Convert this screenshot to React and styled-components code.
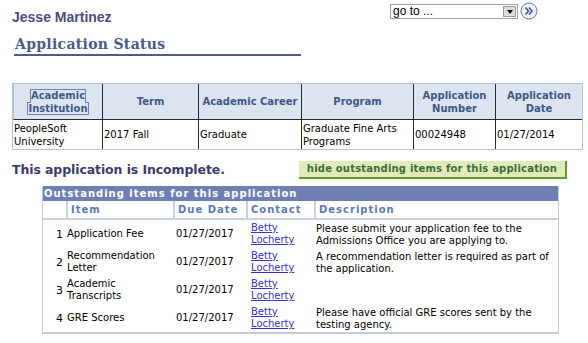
import React from 'react'
import styled, { createGlobalStyle } from 'styled-components'

const GlobalStyle = createGlobalStyle`
  body {
    margin: 0;
    background: #ffffff;
    font-family: "DejaVu Sans", Verdana, sans-serif;
    font-size: 10px;
    color: #000;
  }
`

const apps = [
  {
    institution: 'PeopleSoft University',
    term: '2017 Fall',
    career: 'Graduate',
    program: 'Graduate Fine Arts Programs',
    number: '00024948',
    date: '01/27/2014',
  },
]

const items = [
  { n: 1, item: 'Application Fee', due: '01/27/2017', desc: 'Please submit your application fee to the Admissions Office you are applying to.' },
  { n: 2, item: 'Recommendation Letter', due: '01/27/2017', desc: 'A recommendation letter is required as part of the application.' },
  { n: 3, item: 'Academic Transcripts', due: '01/27/2017', desc: '' },
  { n: 4, item: 'GRE Scores', due: '01/27/2017', desc: 'Please have official GRE scores sent by the testing agency.' },
]

function App() {
  return (
    <Page>
      <GlobalStyle />
      <TopBar>
        <Name>Jesse Martinez</Name>
        <Nav>
          <Select>
            <span>go to ...</span>
            <DropArrow />
          </Select>
          <GoButton>
            <svg width="18" height="18" viewBox="0 0 18 18">
              <circle cx="9" cy="9" r="8" fill="#eef2fa" stroke="#6a7cb0" strokeWidth="1" />
              <path d="M5.5 5.5 L8.5 9 L5.5 12.5 M9 5.5 L12 9 L9 12.5" fill="none" stroke="#2f4a8c" strokeWidth="1.4" />
            </svg>
          </GoButton>
        </Nav>
      </TopBar>

      <Title>Application Status</Title>

      <MainTable>
        <colgroup>
          <col style={{ width: 89 }} />
          <col style={{ width: 96 }} />
          <col style={{ width: 103 }} />
          <col style={{ width: 112 }} />
          <col style={{ width: 82 }} />
          <col style={{ width: 87 }} />
        </colgroup>
        <thead>
          <tr>
            <MainTh $left><FocusLink href="#">Academic Institution</FocusLink></MainTh>
            <MainTh>Term</MainTh>
            <MainTh>Academic Career</MainTh>
            <MainTh>Program</MainTh>
            <MainTh>Application Number</MainTh>
            <MainTh>Application Date</MainTh>
          </tr>
        </thead>
        <tbody>
          {apps.map((a) => (
            <tr key={a.number}>
              <MainTd>{a.institution}</MainTd>
              <MainTd>{a.term}</MainTd>
              <MainTd>{a.career}</MainTd>
              <MainTd>{a.program}</MainTd>
              <MainTd>{a.number}</MainTd>
              <MainTd>{a.date}</MainTd>
            </tr>
          ))}
        </tbody>
      </MainTable>

      <StatusRow>
        <StatusText>This application is Incomplete.</StatusText>
        <HideButton>hide outstanding items for this application</HideButton>
      </StatusRow>

      <ItemsTable>
        <colgroup>
          <col style={{ width: 23 }} />
          <col style={{ width: 107 }} />
          <col style={{ width: 73 }} />
          <col style={{ width: 68 }} />
          <col style={{ width: 244 }} />
        </colgroup>
        <thead>
          <tr>
            <Caption colSpan={5}>Outstanding items for this application</Caption>
          </tr>
          <tr>
            <ItemTh />
            <ItemTh>Item</ItemTh>
            <ItemTh>Due Date</ItemTh>
            <ItemTh>Contact</ItemTh>
            <ItemTh>Description</ItemTh>
          </tr>
        </thead>
        <tbody>
          {items.map((it) => (
            <tr key={it.n}>
              <NumTd>{it.n}</NumTd>
              <ItemTd>{it.item}</ItemTd>
              <ItemTd $pad="3px">{it.due}</ItemTd>
              <ItemTd $pad="5px"><Contact href="#">Betty Locherty</Contact></ItemTd>
              <DescTd>{it.desc}</DescTd>
            </tr>
          ))}
        </tbody>
      </ItemsTable>
    </Page>
  )
}

export default App

const Page = styled.div`
  width: 588px;
  height: 343px;
  overflow: hidden;
`

const TopBar = styled.div`
  display: flex;
  justify-content: space-between;
  align-items: flex-start;
  padding: 2px 50px 0 12px;
`

const Name = styled.div`
  font-family: "Liberation Sans", Arial, sans-serif;
  font-weight: bold;
  font-size: 14px;
  color: #4b4d7e;
  padding-top: 7px;
`

const Nav = styled.div`
  display: flex;
  align-items: center;
  gap: 2px;
`

const Select = styled.div`
  width: 124px;
  height: 13px;
  border: 1px solid #a4a4a4;
  display: flex;
  align-items: center;
  justify-content: space-between;
  font-family: "Liberation Sans", Arial, sans-serif;
  font-size: 12px;
  padding-left: 2px;
  box-sizing: content-box;

  span {
    line-height: 13px;
  }
`

const DropArrow = styled.div`
  width: 13px;
  height: 11px;
  margin-right: 1px;
  background: #dcdcdc;
  border: 1px solid #9a9a9a;
  box-sizing: border-box;
  position: relative;

  &::after {
    content: '';
    position: absolute;
    left: 3px;
    top: 3px;
    border-left: 3px solid transparent;
    border-right: 3px solid transparent;
    border-top: 4px solid #000;
  }
`

const GoButton = styled.div`
  display: flex;
  width: 18px;
  height: 18px;
`

const Title = styled.h1`
  margin: 11px 0 0 14px;
  width: 286px;
  padding: 0 0 2px 1px;
  border-bottom: 2px solid #4f5a88;
  font-family: "DejaVu Serif", Georgia, serif;
  font-weight: bold;
  font-size: 14px;
  letter-spacing: 0.3px;
  color: #4c5a88;
`

const MainTable = styled.table`
  margin: 27px 0 0 12px;
  width: 569px;
  table-layout: fixed;
  border-spacing: 0;
  border: 1px solid #b7c2d8;
  font-size: 10px;
`

const MainTh = styled.th`
  height: 35px;
  padding: 0 2px;
  background: #dce4ef;
  color: #3e5888;
  font-weight: bold;
  line-height: 13px;
  text-align: center;
  border-left: 1px solid ${(p) => (p.$left ? '#b7c2d8' : '#2a2a2a')};
  border-bottom: 1px solid #2a2a2a;
`

const FocusLink = styled.a`
  color: #3e5888;
  text-decoration: none;
  outline: 1px solid #6f84b4;
`

const MainTd = styled.td`
  height: 29px;
  padding: 0 2px 0 1px;
  line-height: 13px;
  vertical-align: middle;
  border-left: 1px solid #2a2a2a;

  &:first-child {
    border-left: none;
  }
`

const StatusRow = styled.div`
  display: flex;
  align-items: flex-start;
  justify-content: space-between;
  padding: 10px 21px 0 12px;
`

const StatusText = styled.div`
  font-weight: bold;
  font-size: 12.5px;
  color: #3b3c6b;
  padding-top: 2px;
  letter-spacing: -0.1px;
`

const HideButton = styled.div`
  width: 266px;
  height: 16px;
  margin-top: 1px;
  background: #e0ebb8;
  border-right: 2px solid #5f9a30;
  border-bottom: 2px solid #5f9a30;
  color: #3d6b3f;
  font-weight: bold;
  font-size: 10px;
  letter-spacing: 0.2px;
  line-height: 16px;
  text-align: center;
`

const ItemsTable = styled.table`
  margin: 7px 0 0 42px;
  width: 515px;
  table-layout: fixed;
  border-spacing: 0;
  border-left: 1px solid #c4cbdd;
  border-right: 1px solid #c4cbdd;
  border-bottom: 2px solid #c4cbdd;
  font-size: 10px;
`

const Caption = styled.th`
  height: 15px;
  padding: 0 0 0 1px;
  background: #6f7fb3;
  color: #ffffff;
  font-weight: bold;
  letter-spacing: 1px;
  text-align: left;
  line-height: 15px;
`

const ItemTh = styled.th`
  height: 17px;
  padding: 0 0 0 3px;
  text-align: left;
  color: #5a7bb4;
  font-weight: bold;
  letter-spacing: 1px;
  border-left: 2px solid #c9d0e0;
  border-bottom: 2px solid #c9d0e0;

  &:first-child {
    border-left: none;
  }
`

const NumTd = styled.td`
  height: 28px;
  padding: 0 3px 0 0;
  text-align: right;
  font-size: 11px;
  vertical-align: middle;
`

const ItemTd = styled.td`
  padding: 0 0 0 ${(p) => p.$pad || '1px'};
  line-height: 12px;
  vertical-align: middle;
`

const Contact = styled.a`
  color: #3333cc;
  text-decoration: underline;
  display: block;
  width: 50px;
`

const DescTd = styled.td`
  padding: 3px 0 0 2px;
  line-height: 12px;
  vertical-align: top;
`
